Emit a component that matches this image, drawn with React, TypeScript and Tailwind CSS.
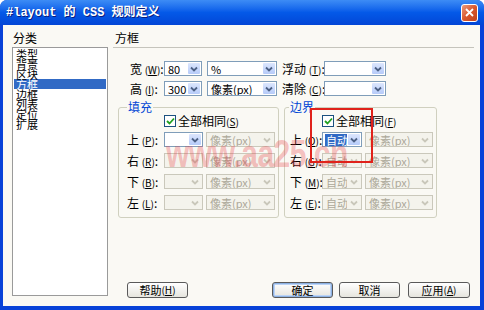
import React from 'react';
import clsx from 'clsx';

const cjk = { fontFamily: '"Noto Sans CJK SC", "Liberation Sans", sans-serif' };

// small chevron for the XP combo buttons
function Chevron({ disabled }: { disabled?: boolean }) {
  return (
    <svg width="8" height="6" viewBox="0 0 8 6">
      <path
        d="M1 1.5 L4 4.5 L7 1.5"
        fill="none"
        stroke={disabled ? '#c9c7ba' : '#4d6185'}
        strokeWidth="1.8"
      />
    </svg>
  );
}

interface SelectProps {
  className: string;
  value?: string;
  disabled?: boolean;
  selected?: boolean;
}

function Select({ className, value, disabled, selected }: SelectProps) {
  return (
    <div
      className={clsx(
        'flex h-[15px] shrink-0 items-stretch border',
        disabled ? 'border-[#cac8bb] bg-[#f4f3ec]' : 'border-[#7f9db9] bg-white',
        className,
      )}
    >
      <div className="flex min-w-0 flex-1 items-center overflow-hidden pl-[2px]">
        {value && (
          <span
            className={clsx(
              'whitespace-nowrap px-[1px] text-[11px] leading-[12px]',
              disabled ? 'text-[#aca899]' : selected ? 'bg-[#316ac5] text-white' : 'text-black',
            )}
          >
            {value}
          </span>
        )}
      </div>
      <div
        className={clsx(
          'm-[1px] flex w-[12px] items-center justify-center rounded-[1px]',
          disabled ? 'bg-[#f4f3ec]' : 'bg-gradient-to-b from-[#dce6fd] to-[#b6cbf9]',
        )}
      >
        <Chevron disabled={disabled} />
      </div>
    </div>
  );
}

function Label({ text, k, className }: { text: string; k: string; className: string }) {
  return (
    <div className={clsx('shrink-0 whitespace-nowrap text-[12px] leading-[15px] text-black', className)}>
      {text}
      <span className="text-[10px]">
        (<u>{k}</u>)
      </span>
      :
    </div>
  );
}

function Checkbox() {
  return (
    <div className="flex h-[12px] w-[12px] shrink-0 items-center justify-center border border-[#1c5180] bg-white">
      <svg width="9" height="8" viewBox="0 0 9 8">
        <path d="M1 4 L3.5 6.5 L8 1.5" fill="none" stroke="#21a121" strokeWidth="1.8" />
      </svg>
    </div>
  );
}

function Button({ children, className, focused }: { children: React.ReactNode; className: string; focused?: boolean }) {
  return (
    <div
      className={clsx(
        'flex h-[16px] shrink-0 items-center justify-center rounded-[3px] border border-[#5a5a5a] bg-gradient-to-b from-white to-[#e6e5de] text-[11px] leading-[12px] text-black',
        focused && 'shadow-[inset_0_0_0_1px_#8db2e3,inset_0_0_0_2px_#bcd4f6]',
        className,
      )}
    >
      {children}
    </div>
  );
}

const boxRows = [
  { label: '上', k: 'P' },
  { label: '右', k: 'R' },
  { label: '下', k: 'B' },
  { label: '左', k: 'L' },
];

const marginRows = [
  { label: '上', k: 'O' },
  { label: '右', k: 'G' },
  { label: '下', k: 'M' },
  { label: '左', k: 'E' },
];

const categories = ['类型', '背景', '区块', '方框', '边框', '列表', '定位', '扩展'];

export default function App() {
  return (
    <div
      className="relative flex h-[310px] w-[484px] flex-col overflow-hidden rounded-t-[7px] bg-[#0842d8]"
      style={cjk}
    >
      {/* title bar */}
      <div className="flex h-[25px] shrink-0 items-center justify-between bg-gradient-to-b from-[#3d8cf5] via-[#0459e8] to-[#0346d6] pl-[6px] pr-[6px]">
        <div
          className="whitespace-nowrap text-[12px] font-bold leading-[14px] text-white [text-shadow:1px_1px_0_#0a1e80]"
          style={{ fontFamily: '"Liberation Mono", "Noto Sans CJK SC", monospace' }}
        >
          #layout 的 CSS 规则定义
        </div>
        <div className="flex h-[18px] w-[17px] items-center justify-center rounded-[3px] border border-white bg-gradient-to-br from-[#e89a7c] via-[#d9572d] to-[#c0431c]">
          <svg width="9" height="9" viewBox="0 0 9 9">
            <path d="M1 1 L8 8 M8 1 L1 8" stroke="white" strokeWidth="1.8" />
          </svg>
        </div>
      </div>

      {/* body */}
      <div className="mb-[4px] ml-[3px] mr-[4px] flex flex-1 bg-[#faf9f4]">
        {/* category list */}
        <div className="ml-[9px] flex w-[96px] flex-col pt-[7px]">
          <div className="pl-[1px] text-[12px] leading-[12px] text-black">分类</div>
          <div className="mt-[3px] h-[249px] border border-[#9a9a9a] bg-white pt-[1px]">
            {categories.map((c) => (
              <div
                key={c}
                className={clsx(
                  'mx-[1px] h-[10px] pl-[2px] text-[11px] leading-[10px]',
                  c === '方框' ? 'bg-[#316ac5] text-white' : 'text-black',
                )}
              >
                {c}
              </div>
            ))}
          </div>
        </div>

        {/* panel */}
        <div className="ml-[5px] flex flex-col pt-[7px]">
          <div className="pl-[2px] text-[12px] leading-[12px] text-black">方框</div>
          <div className="mt-[3px] h-[2px] w-[361px] border-t border-[#c5c4bc] border-b-white" />

          <div className="mt-[12px] flex h-[15px] items-center pl-[17px]">
            <Label text="宽 " k="W" className="w-[34px]" />
            <Select className="w-[38px]" value="80" />
            <Select className="ml-[5px] w-[70px]" value="%" />
            <Label text="浮动 " k="T" className="ml-[5px] w-[42px]" />
            <Select className="w-[62px]" />
          </div>
          <div className="mt-[5px] flex h-[15px] items-center pl-[17px]">
            <Label text="高 " k="I" className="w-[34px]" />
            <Select className="w-[38px]" value="300" />
            <Select className="ml-[5px] w-[70px]" value="像素(px)" />
            <Label text="清除 " k="C" className="ml-[5px] w-[42px]" />
            <Select className="w-[62px]" />
          </div>

          <div className="ml-[5px] mt-[5px] flex gap-[5px]">
            <fieldset className="h-[117px] w-[161px] rounded-[3px] border border-[#d0d0bf]">
              <legend className="ml-[8px] px-[1px] text-[12px] leading-[12px] text-[#0046d5]">填充</legend>
              <div className="ml-[45px] mt-[2px] flex h-[12px] items-center gap-[2px]">
                <Checkbox />
                <span className="whitespace-nowrap text-[12px] leading-[12px] text-black">
                  全部相同<span className="text-[10px]">(<u>S</u>)</span>
                </span>
              </div>
              <div className="mt-[5px] flex flex-col gap-[6px]">
                {boxRows.map((r, i) => (
                  <div key={r.k} className="flex h-[15px] items-center pl-[8px]">
                    <Label text={r.label + ' '} k={r.k} className="w-[37px]" />
                    <Select className="w-[39px]" disabled={i > 0} />
                    <Select className="ml-[3px] w-[69px]" value="像素(px)" disabled />
                  </div>
                ))}
              </div>
            </fieldset>

            <fieldset className="h-[117px] w-[153px] rounded-[3px] border border-[#d0d0bf]">
              <legend className="ml-[4px] px-[1px] text-[12px] leading-[12px] text-[#0046d5]">边界</legend>
              <div className="ml-[37px] mt-[2px] flex h-[12px] items-center gap-[2px]">
                <Checkbox />
                <span className="whitespace-nowrap text-[12px] leading-[12px] text-black">
                  全部相同<span className="text-[10px]">(<u>F</u>)</span>
                </span>
              </div>
              <div className="mt-[5px] flex flex-col gap-[6px]">
                {marginRows.map((r, i) => (
                  <div key={r.k} className="flex h-[15px] items-center pl-[5px]">
                    <Label text={r.label + ' '} k={r.k} className="w-[32px]" />
                    <Select className="w-[40px]" value="自动" disabled={i > 0} selected={i === 0} />
                    <Select className="ml-[3px] w-[68px]" value="像素(px)" disabled />
                  </div>
                ))}
              </div>
            </fieldset>
          </div>

          <div className="mt-[64px] flex">
            <Button className="ml-[14px] w-[61px]">
              帮助<span className="text-[10px]">(<u>H</u>)</span>
            </Button>
            <Button className="ml-[84px] w-[61px]" focused>
              确定
            </Button>
            <Button className="ml-[6px] w-[61px]">取消</Button>
            <Button className="ml-[8px] w-[62px]">
              应用<span className="text-[10px]">(<u>A</u>)</span>
            </Button>
          </div>
        </div>
      </div>

      {/* watermark */}
      <div
        className="pointer-events-none absolute left-[166px] top-[134px] origin-top scale-y-[1.3] whitespace-nowrap text-[30px] font-bold leading-[30px] tracking-[-0.5px] text-[#e8383d]/30"
        style={{ fontFamily: '"Liberation Sans", sans-serif' }}
      >
        www.aa25.cn
      </div>

      {/* red annotation box */}
      <div className="pointer-events-none absolute left-[310px] top-[108px] h-[55px] w-[63px] border-2 border-[#e0221b]" />
    </div>
  );
}
